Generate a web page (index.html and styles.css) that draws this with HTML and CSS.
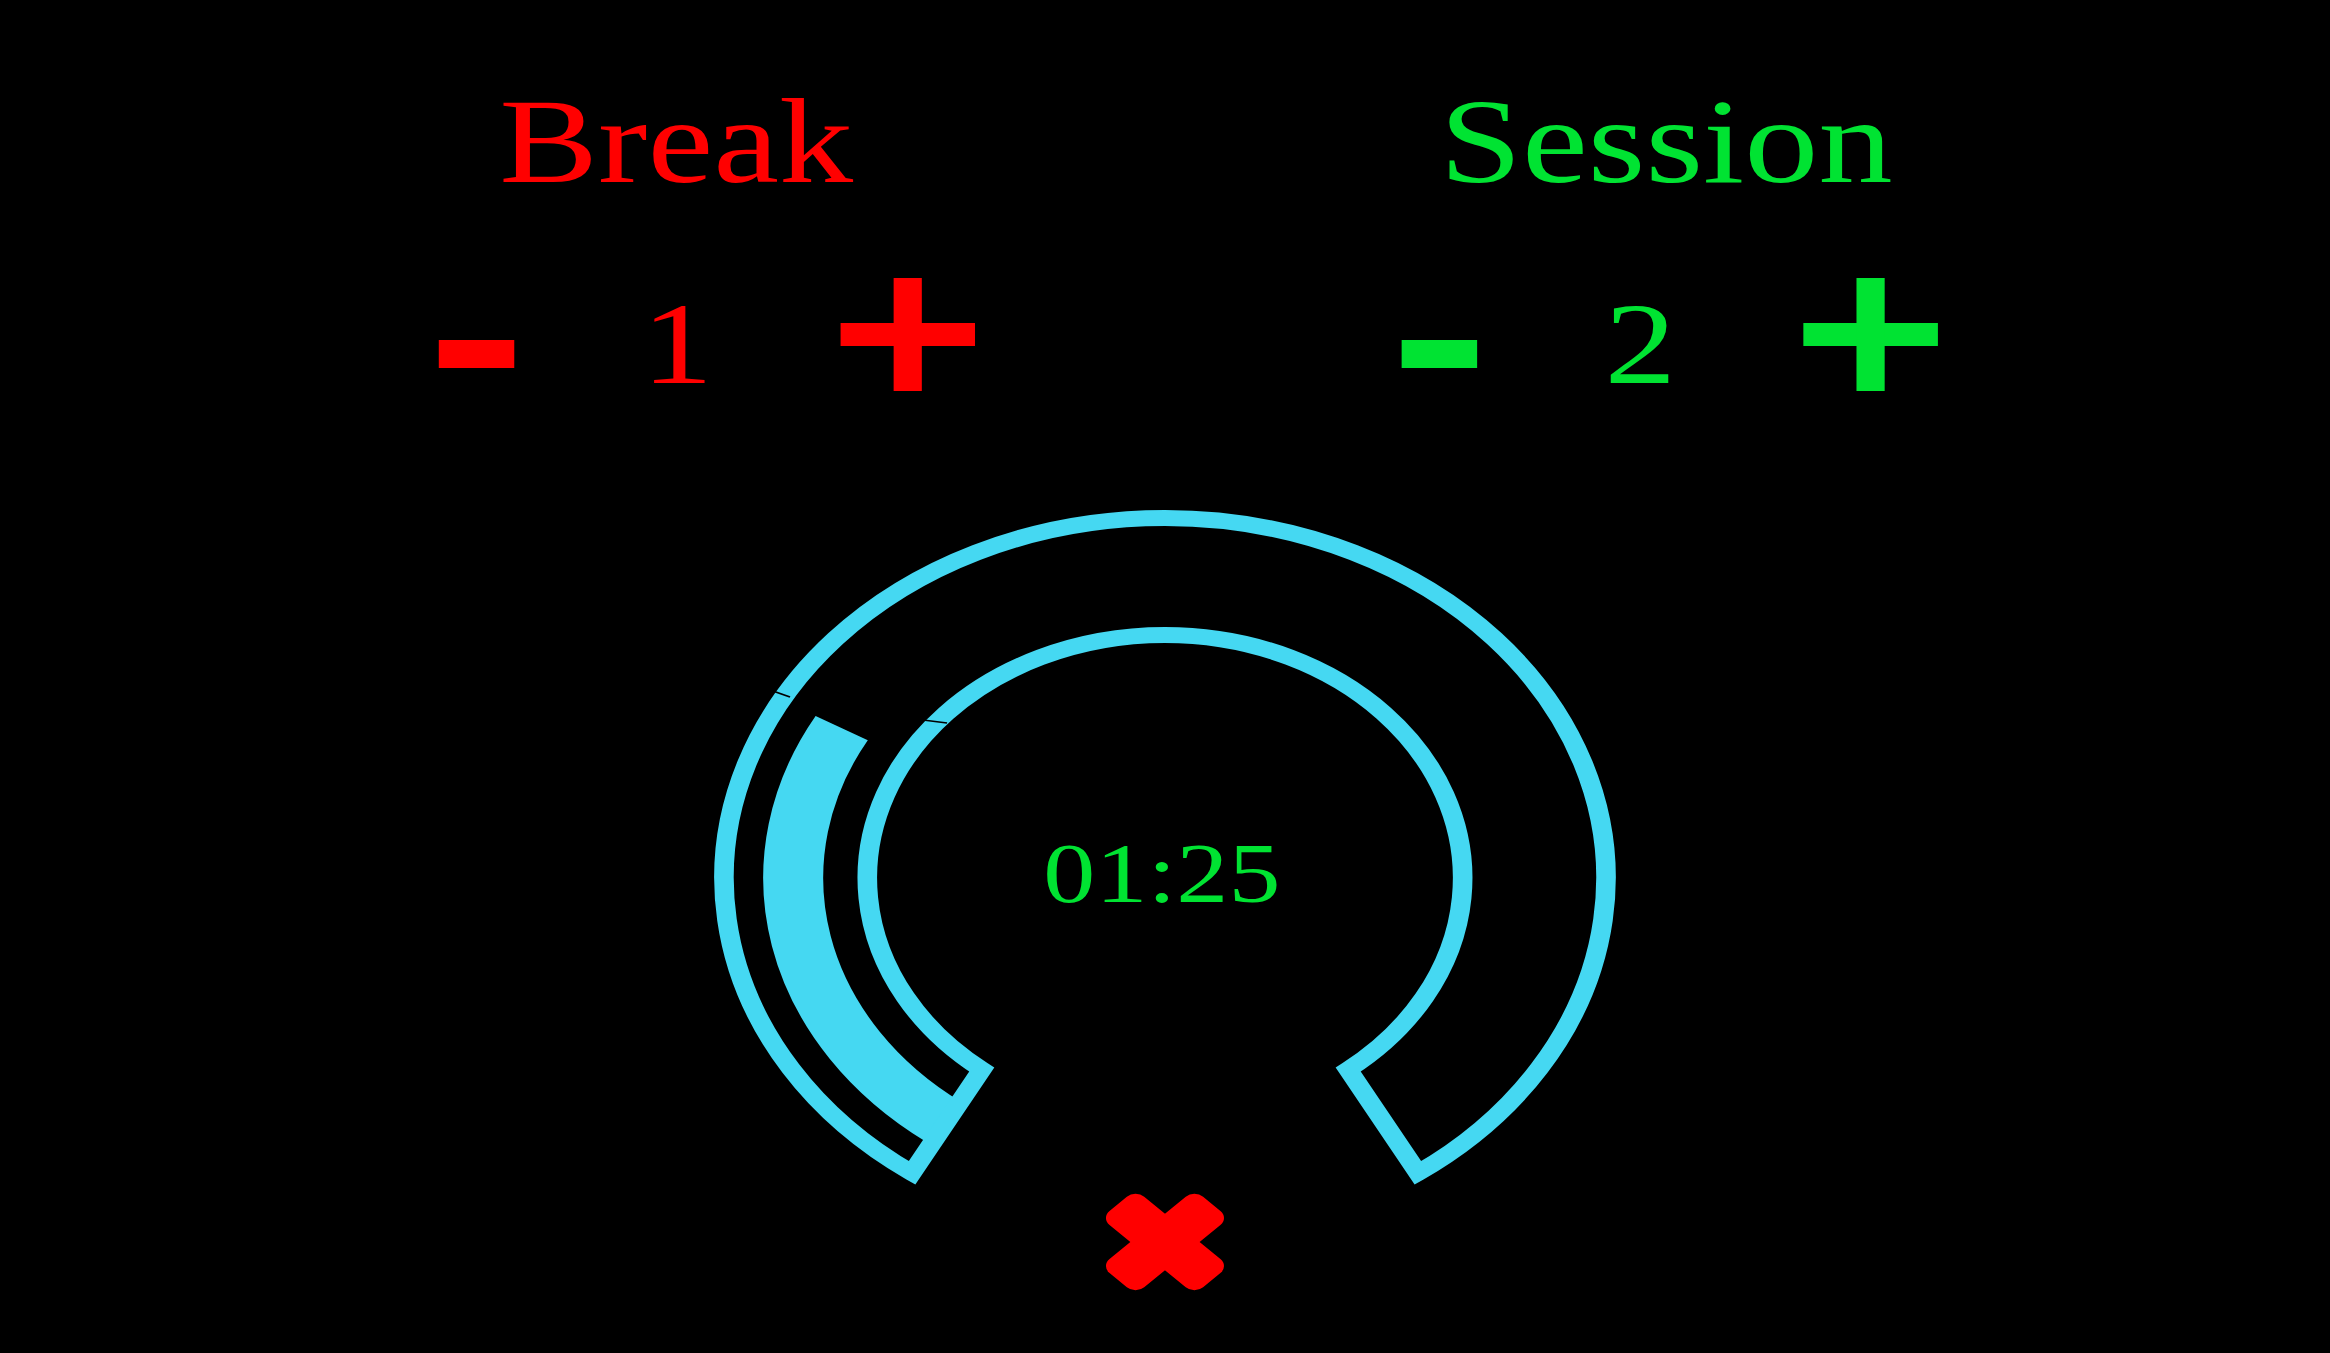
FILE: index.html
```html
<!DOCTYPE html>
<html lang="en">
<head>
<meta charset="utf-8">
<title>Pomodoro Clock</title>
<link rel="stylesheet" href="styles.css">
</head>
<body>
<div class="stage">
  <div class="settings">
    <section class="panel panel-break">
      <h2 class="title">Break</h2>
      <div class="controls">
        <button class="btn btn-minus" aria-label="decrease break">
          <svg class="icon-minus" viewBox="0 0 62 28"><rect width="62" height="28"/></svg>
        </button>
        <span class="value">1</span>
        <button class="btn btn-plus" aria-label="increase break">
          <svg class="icon-plus" viewBox="0 0 110 113"><rect x="0" y="45" width="110" height="23"/><rect x="43.5" y="0" width="23" height="113"/></svg>
        </button>
      </div>
    </section>
    <section class="panel panel-session">
      <h2 class="title">Session</h2>
      <div class="controls">
        <button class="btn btn-minus" aria-label="decrease session">
          <svg class="icon-minus" viewBox="0 0 62 28"><rect width="62" height="28"/></svg>
        </button>
        <span class="value">2</span>
        <button class="btn btn-plus" aria-label="increase session">
          <svg class="icon-plus" viewBox="0 0 110 113"><rect x="0" y="45" width="110" height="23"/><rect x="43.5" y="0" width="23" height="113"/></svg>
        </button>
      </div>
    </section>
  </div>

  <div class="timer">
    <svg class="ring" viewBox="0 0 760 684" width="760" height="684">
      <path class="ring-progress" d="M199.47 613.97 A303.5 303.5 0 0 1 116.11 220.09"/>
      <path class="ring-outline" d="M173.51 664.89 A360 360 0 1 1 586.49 664.89 L529.6 561.5 A243 243 0 1 0 230.4 561.5 Z"/>
      <line class="ring-seam" x1="57.6" y1="182" x2="73.9" y2="189"/>
      <line class="ring-seam" x1="182.5" y1="212" x2="202.1" y2="215"/>
    </svg>
    <div class="time">01:25</div>
  </div>

  <button class="reset" aria-label="reset">
    <svg viewBox="-52 -50 104 100" width="104" height="100">
      <rect x="-54" y="-20" width="108" height="40" rx="10" transform="rotate(45)"/>
      <rect x="-54" y="-20" width="108" height="40" rx="10" transform="rotate(-45)"/>
    </svg>
  </button>
</div>
</body>
</html>
```

FILE: styles.css
```css
html, body {
  margin: 0;
  padding: 0;
  background: #000;
  overflow: hidden;
}

body {
  font-family: "Liberation Serif", "Times New Roman", serif;
  width: 2330px;
  height: 1353px;
}

.stage {
  width: 1902px;
  padding-top: 81px;
  transform: scaleX(1.225);
  transform-origin: 0 0;
}

.settings {
  display: flex;
  justify-content: center;
  padding-left: 10px;
}

.panel {
  width: 808px;
  display: flex;
  flex-direction: column;
  align-items: center;
}

.panel-break { color: #ff0000; }
.panel-session { color: #00e332; }

.title {
  margin: 0;
  font-weight: normal;
  font-size: 121px;
  line-height: 121px;
  height: 121px;
}

.controls {
  margin-top: 76px;
  height: 113px;
  display: flex;
  align-items: flex-start;
  gap: 104px;
}

.panel-break .controls { margin-left: 50px; }
.panel-session .controls { margin-left: 6px; }

.btn {
  background: none;
  border: 0;
  padding: 0;
  margin: 0;
  color: inherit;
  display: block;
}

.btn svg {
  display: block;
  fill: currentColor;
}

.btn-minus {
  margin-top: 62px;
}

.icon-minus {
  width: 62px;
  height: 28px;
}

.icon-plus {
  width: 110px;
  height: 113px;
}

.value {
  display: block;
  margin-top: 7px;
  font-size: 117px;
  line-height: 117px;
}

.timer {
  position: relative;
  width: 760px;
  height: 684px;
  margin: 117px auto 0;
}

.ring {
  display: block;
}

.ring-outline {
  fill: none;
  stroke: #45d8f2;
  stroke-width: 16;
  stroke-linejoin: miter;
}

.ring-progress {
  fill: none;
  stroke: #45d8f2;
  stroke-width: 49;
  stroke-linecap: butt;
}

.ring-seam {
  stroke: #000;
  stroke-width: 1.6;
}

.time {
  position: absolute;
  top: 323px;
  left: 0;
  right: 5px;
  text-align: center;
  color: #00e332;
  font-size: 85px;
  line-height: 85px;
}

.reset {
  display: block;
  margin: 0 auto;
  padding: 0;
  border: 0;
  background: none;
  width: 104px;
  height: 100px;
}

.reset svg {
  display: block;
  fill: #ff0000;
}
```
